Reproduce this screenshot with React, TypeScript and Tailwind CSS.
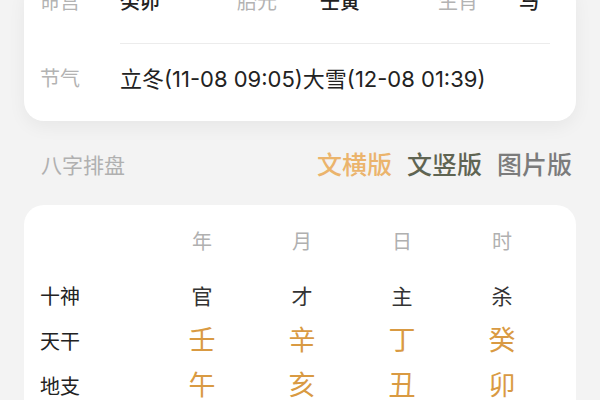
import React from 'react'

const font = { fontFamily: 'Inter, "Noto Sans CJK SC", "Noto Sans", sans-serif' }

const columns = ['年', '月', '日', '时']

const rows = [
  { label: '十神', values: ['官', '才', '主', '杀'], kind: 'god' },
  { label: '天干', values: ['壬', '辛', '丁', '癸'], kind: 'stem' },
  { label: '地支', values: ['午', '亥', '丑', '卯'], kind: 'stem' },
]

export default function App() {
  return (
    <div className="w-[600px] h-[400px] overflow-hidden bg-[#f3f3f3]" style={font}>
      {/* 基本信息卡片（页面已向下滚动） */}
      <div className="mx-6 -mt-[18px] bg-white rounded-[20px] shadow-[0_6px_18px_rgba(0,0,0,0.05)] pb-[22px]">
        <div className="grid grid-cols-[80px_117px_83px_118px_81px_1fr] items-center h-[40px] pl-4 text-[20px]">
          <span className="text-[#b3b3b3]">命宫</span>
          <span className="text-[#222] font-medium">癸卯</span>
          <span className="text-[#b3b3b3]">胎元</span>
          <span className="text-[#222] font-medium">壬寅</span>
          <span className="text-[#b3b3b3]">生肖</span>
          <span className="text-[#222] font-medium">马</span>
        </div>
        <div className="ml-[96px] mr-[26px] mt-[21px] h-px bg-[#ececec]" />
        <div className="flex items-center h-[40px] mt-[15px] pl-4">
          <span className="w-[80px] text-[20px] text-[#b3b3b3]">节气</span>
          <span className="text-[22px] text-[#222]">立冬(11-08 09:05)大雪(12-08 01:39)</span>
        </div>
      </div>

      {/* 八字排盘标题 */}
      <div className="flex items-center justify-between h-[40px] mt-[25px] pl-[41px] pr-[28px]">
        <span className="text-[21px] text-[#b0b0b0]">八字排盘</span>
        <div className="flex items-center gap-[15px] text-[25px] font-medium">
          <span className="text-[#ebb46c]">文横版</span>
          <span className="text-[#5f6452]">文竖版</span>
          <span className="text-[#7b7b7b]">图片版</span>
        </div>
      </div>

      {/* 排盘表格 */}
      <div className="mx-6 mt-[19px] bg-white rounded-[20px] pt-[15px] pb-4 pl-4">
        <div className="grid grid-cols-[112px_100px_100px_100px_100px] items-center h-[44px] text-[20px] text-[#b0b0b0]">
          <span />
          {columns.map((c) => (
            <span key={c} className="text-center">{c}</span>
          ))}
        </div>
        <div className="mt-[10px]">
          {rows.map((r) => (
            <div
              key={r.label}
              className="grid grid-cols-[112px_100px_100px_100px_100px] items-center h-[45px]"
            >
              <span className="text-[20px] text-[#222]">{r.label}</span>
              {r.values.map((v, i) => (
                <span
                  key={i}
                  className={
                    r.kind === 'god'
                      ? 'text-center text-[21px] text-[#333]'
                      : 'text-center text-[27px] text-[#d99a42]'
                  }
                >
                  {v}
                </span>
              ))}
            </div>
          ))}
        </div>
      </div>
    </div>
  )
}
